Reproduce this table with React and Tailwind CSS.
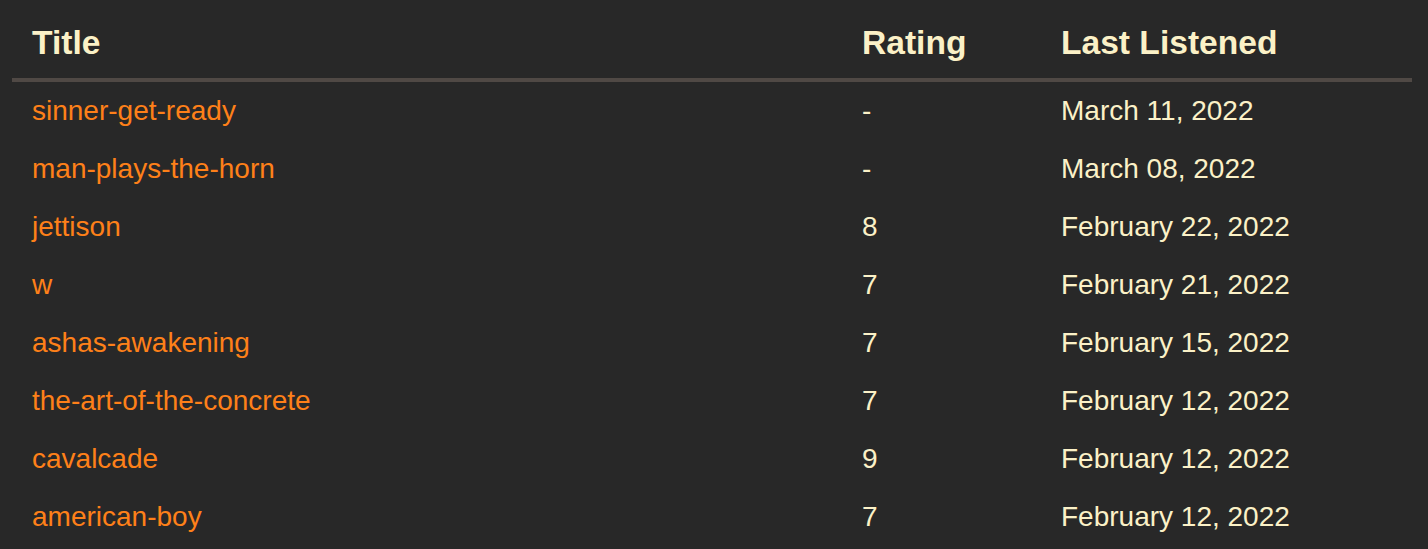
import React from 'react';

const rows = [
  { title: 'sinner-get-ready', rating: '-', date: 'March 11, 2022' },
  { title: 'man-plays-the-horn', rating: '-', date: 'March 08, 2022' },
  { title: 'jettison', rating: '8', date: 'February 22, 2022' },
  { title: 'w', rating: '7', date: 'February 21, 2022' },
  { title: 'ashas-awakening', rating: '7', date: 'February 15, 2022' },
  { title: 'the-art-of-the-concrete', rating: '7', date: 'February 12, 2022' },
  { title: 'cavalcade', rating: '9', date: 'February 12, 2022' },
  { title: 'american-boy', rating: '7', date: 'February 12, 2022' },
];

export default function App() {
  return (
    <div className="min-h-screen bg-[#282828] pl-[12px] pr-[16px] pt-[12px] text-[#fbf1c7] font-['Liberation_Sans',Arial,sans-serif]">
      <table className="w-full table-fixed border-collapse text-left">
        <colgroup>
          <col className="w-[830px]" />
          <col className="w-[199px]" />
          <col />
        </colgroup>
        <thead>
          <tr className="border-b-4 border-[#504945] text-[33.6px] font-bold">
            <th className="px-[20px] pt-[13px] pb-[17px] leading-[36px]">Title</th>
            <th className="px-[20px] pt-[13px] pb-[17px] leading-[36px]">Rating</th>
            <th className="px-[20px] pt-[13px] pb-[17px] leading-[36px]">Last Listened</th>
          </tr>
        </thead>
        <tbody className="text-[28px]">
          {rows.map((row) => (
            <tr key={row.title}>
              <td className="px-[20px] py-[13px] leading-[32px]">
                <a href="#" className="text-[#fe8019]">{row.title}</a>
              </td>
              <td className="px-[20px] py-[13px] leading-[32px]">{row.rating}</td>
              <td className="px-[20px] py-[13px] leading-[32px]">{row.date}</td>
            </tr>
          ))}
        </tbody>
      </table>
    </div>
  );
}
